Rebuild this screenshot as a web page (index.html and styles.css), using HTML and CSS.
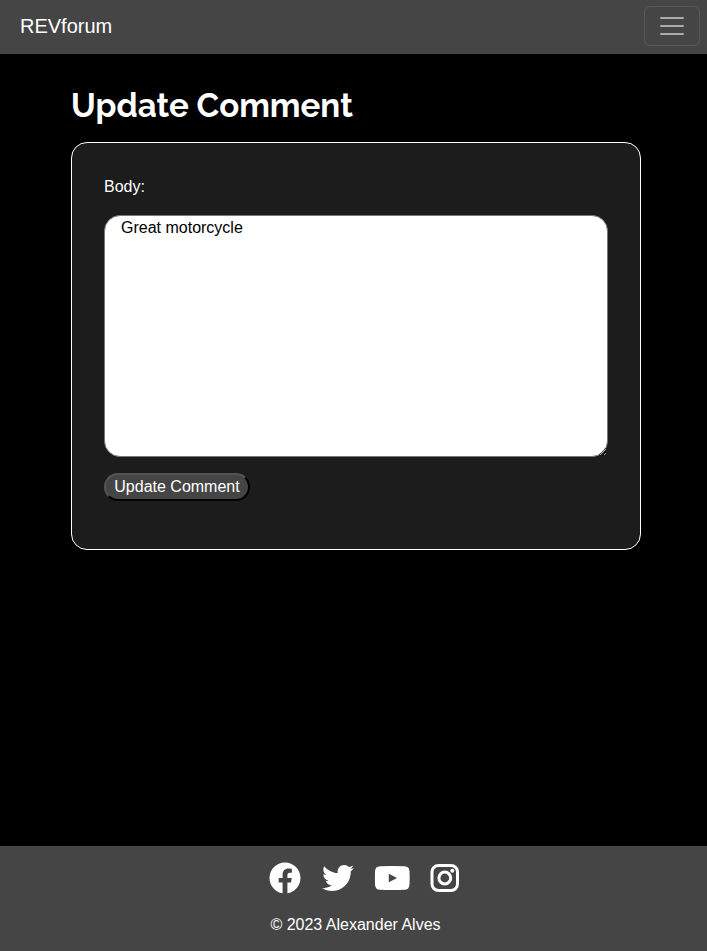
FILE: index.html
```html
<!DOCTYPE html>
<html lang="en">
<head>
<meta charset="utf-8">
<title>REVforum</title>
<link rel="stylesheet" href="styles.css">
</head>
<body>
<header class="navbar">
  <a class="brand">REVforum</a>
  <button class="toggler" type="button" aria-label="Toggle navigation">
    <svg width="30" height="30" viewBox="0 0 30 30"><path stroke="rgba(255,255,255,.55)" stroke-linecap="round" stroke-miterlimit="10" stroke-width="2" d="M4 7h22M4 15h22M4 23h22"/></svg>
  </button>
</header>
<main class="content">
  <h1 class="title">Update Comment</h1>
  <form class="card">
    <label class="label" for="body">Body:</label>
    <textarea class="body-field" id="body" spellcheck="false">Great motorcycle</textarea>
    <button class="submit" type="button">Update Comment</button>
  </form>
</main>
<footer class="footer">
  <div class="social">
    <svg width="32" height="32" viewBox="0 0 512 512"><path d="M504 256C504 119 393 8 256 8S8 119 8 256c0 123.78 90.69 226.38 209.25 245V327.69h-63V256h63v-54.64c0-62.15 37-96.48 93.67-96.48 27.14 0 55.52 4.84 55.52 4.84v61h-31.28c-30.8 0-40.41 19.12-40.41 38.73V256h68.78l-11 71.69h-57.78V501C413.31 482.38 504 379.78 504 256z"/></svg>
    <svg width="32" height="32" viewBox="0 0 512 512"><path d="M459.37 151.716c.325 4.548.325 9.097.325 13.645 0 138.72-105.583 298.558-298.558 298.558-59.452 0-114.68-17.219-161.137-47.106 8.447.974 16.568 1.299 25.34 1.299 49.055 0 94.213-16.568 130.274-44.832-46.132-.975-84.792-31.188-98.112-72.772 6.498.974 12.995 1.624 19.818 1.624 9.421 0 18.843-1.3 27.614-3.573-48.081-9.747-84.143-51.98-84.143-102.985v-1.299c13.969 7.797 30.214 12.67 47.431 13.319-28.264-18.843-46.781-51.005-46.781-87.391 0-19.492 5.197-37.36 14.294-52.954 51.655 63.675 129.3 105.258 216.365 109.807-1.624-7.797-2.599-15.918-2.599-24.04 0-57.828 46.782-104.934 104.934-104.934 30.213 0 57.502 12.67 76.67 33.137 23.715-4.548 46.456-13.32 66.599-25.34-7.798 24.366-24.366 44.833-46.132 57.827 21.117-2.273 41.584-8.122 60.426-16.243-14.292 20.791-32.161 39.308-52.628 54.253z"/></svg>
    <svg width="36" height="32" viewBox="0 0 36 32"><path fill-rule="evenodd" d="M6 4.2Q18 3.800 30.500 4.200C34 4.400 35.500 6.500 35.500 9.500Q35.900 16 35.500 22.500C35.300 26 33.500 27.700 30.500 27.800Q18 28.200 6 27.800C2.800 27.600 1.200 26 1 22.500Q.8 16 1 9.500C1.200 6 2.800 4.300 6 4.200ZM14.800 11.700V20.300L23 16Z"/></svg>
    <svg class="instagram" width="28" height="32" viewBox="0 0 28 32"><rect x="1" y="3.500" width="25.500" height="25" rx="6.500"/><circle cx="13.800" cy="16" r="5.900"/><circle class="dot" cx="21.300" cy="8.700" r="2"/></svg>
  </div>
  <p class="copyright">© 2023 Alexander Alves</p>
</footer>
</body>
</html>
```

FILE: styles.css
```css
* { box-sizing: border-box; }

body {
  margin: 0;
  min-height: 951px;
  display: flex;
  flex-direction: column;
  background: #000;
  color: #fff;
  font: 16px/24px "Liberation Sans", Arial, sans-serif;
}

.navbar {
  display: flex;
  align-items: center;
  justify-content: space-between;
  height: 54px;
  padding: 0 7px 2px 20px;
  background: #454545;
}

.brand { font-size: 20px; line-height: 30px; }

.toggler {
  display: flex;
  align-items: center;
  justify-content: center;
  width: 56px;
  height: 40px;
  padding: 0;
  border: 1px solid rgba(255, 255, 255, .1);
  border-radius: 6px;
  background: transparent;
}

.content {
  flex: 1;
  padding: 32px 66px 0 71px;
}

.title {
  margin: 0 0 16px;
  font: 700 33px/40px Raleway, Lato, sans-serif;
}

.card {
  display: flex;
  flex-direction: column;
  align-items: flex-start;
  height: 408px;
  padding: 32px 32px 31px;
  border: 1px solid #fff;
  border-radius: 16px;
  background: #1c1c1c;
}

.label { margin-bottom: 16px; }

.body-field {
  width: 504px;
  height: 242px;
  margin: 0 0 16px;
  padding: 0 16px;
  border: 1px solid #767676;
  border-radius: 16px;
  background: #fff;
  color: #000;
  font: inherit;
}

.submit {
  height: 28px;
  width: 146px;
  padding: 0;
  border: 2px outset #454545;
  border-color: #535353 #000 #000 #535353;
  border-radius: 16px;
  background: #454545;
  color: #fff;
  font: inherit;
}

.footer {
  height: 105px;
  padding-top: 16px;
  background: #454545;
}

.social {
  display: flex;
  gap: 20.6px;
  padding-left: 269px;
  fill: #fff;
}

.instagram {
  fill: none;
  stroke: #fff;
  stroke-width: 3px;
  overflow: visible;
}

.dot {
  fill: #fff;
  stroke: none;
}

.copyright {
  margin: 19px 0 0;
  padding-left: 4px;
  text-align: center;
}
```
